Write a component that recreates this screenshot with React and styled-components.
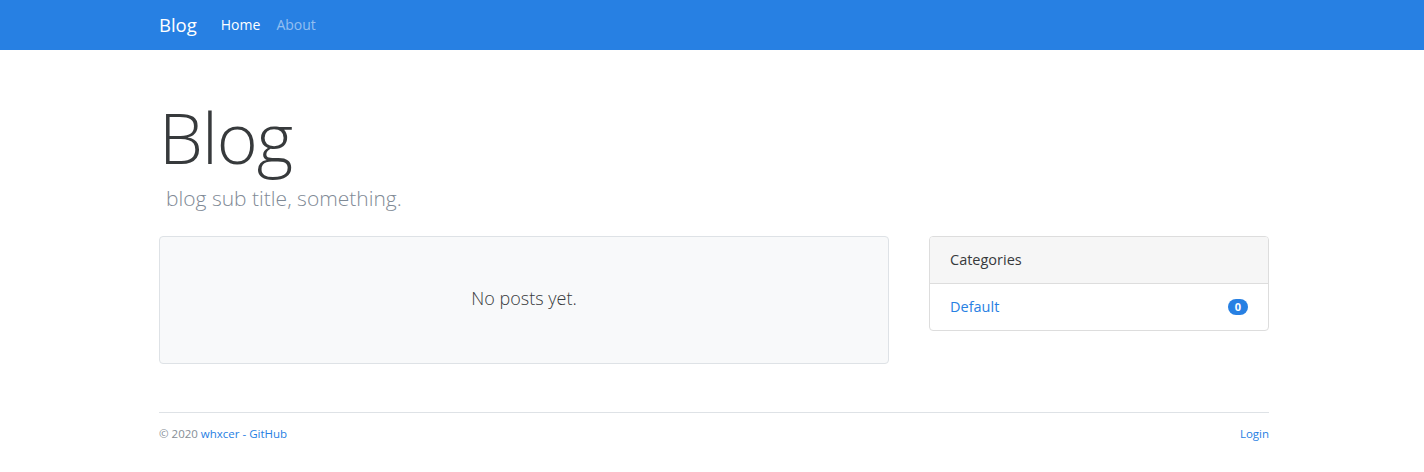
import React from "react";
import styled, { createGlobalStyle } from "styled-components";

const GlobalStyle = createGlobalStyle`
  body {
    margin: 0;
    background: #fff;
    font-family: "Open Sans", "Noto Sans", sans-serif;
    font-size: 15px;
    color: #373a3c;
  }
  a {
    color: #2780e3;
    text-decoration: none;
  }
`;

const Container = styled.div`
  width: 1110px;
  margin: 0 auto;
  padding-left: 4px;
`;

const Navbar = styled.nav`
  height: 50px;
  background: #2780e3;
`;
const NavInner = styled(Container)`
  display: flex;
  align-items: center;
  height: 48px;
`;
const Brand = styled.a`
  font-size: 18.5px;
  color: #fff !important;
  margin-right: 16px;
`;
const NavLink = styled.a`
  padding: 0 8px;
  font-size: 14px;
  color: ${(p) => (p.$active ? "#fff" : "rgba(255,255,255,0.5)")} !important;
`;

const Title = styled.h1`
  margin: 45px 0 0;
  font-size: 70px;
  font-weight: 300;
  line-height: 1.2;
  letter-spacing: -1px;
  color: #373a3c;
`;
const Subtitle = styled.p`
  margin: 4px 0 0 7px;
  font-size: 21px;
  font-weight: 300;
  line-height: 30px;
  color: #7f8a96;
`;

const Row = styled.div`
  display: grid;
  grid-template-columns: 730px 340px;
  column-gap: 40px;
  align-items: start;
  margin-top: 23px;
`;

const EmptyCard = styled.div`
  background: #f8f9fa;
  border: 1px solid #dee2e6;
  border-radius: 4px;
  padding: 46px 20px 50px;
  text-align: center;
  font-size: 18px;
  font-weight: 300;
  line-height: 30px;
`;

const Card = styled.div`
  border: 1px solid #dddddd;
  border-radius: 4px;
  overflow: hidden;
`;
const CardHeader = styled.div`
  background: #f6f6f6;
  padding: 12px 20px;
  line-height: 22px;
  font-size: 14.5px;
  border-bottom: 1px solid #dddddd;
`;
const ListItem = styled.div`
  display: flex;
  justify-content: space-between;
  align-items: center;
  padding: 12px 20px;
  line-height: 22px;
  font-size: 14.5px;
`;
const Badge = styled.span`
  display: inline-flex;
  align-items: center;
  justify-content: center;
  min-width: 20px;
  height: 16px;
  border-radius: 8px;
  background: #2780e3;
  color: #fff;
  font-size: 11px;
  font-weight: 700;
`;

const Footer = styled.footer`
  margin-top: 48px;
  border-top: 1px solid #dee2e6;
  display: flex;
  justify-content: space-between;
  padding-top: 12px;
  font-size: 11.5px;
  line-height: 18px;
  color: #868e96;
`;

export default function App() {
  return (
    <>
      <GlobalStyle />
      <Navbar>
        <NavInner>
          <Brand href="#">Blog</Brand>
          <NavLink href="#" $active>
            Home
          </NavLink>
          <NavLink href="#">About</NavLink>
        </NavInner>
      </Navbar>
      <Container>
        <Title>Blog</Title>
        <Subtitle>blog sub title, something.</Subtitle>
        <Row>
          <EmptyCard>No posts yet.</EmptyCard>
          <Card>
            <CardHeader>Categories</CardHeader>
            <ListItem>
              <a href="#">Default</a>
              <Badge>0</Badge>
            </ListItem>
          </Card>
        </Row>
        <Footer>
          <span>
            © 2020 <a href="#">whxcer - GitHub</a>
          </span>
          <a href="#">Login</a>
        </Footer>
      </Container>
    </>
  );
}
